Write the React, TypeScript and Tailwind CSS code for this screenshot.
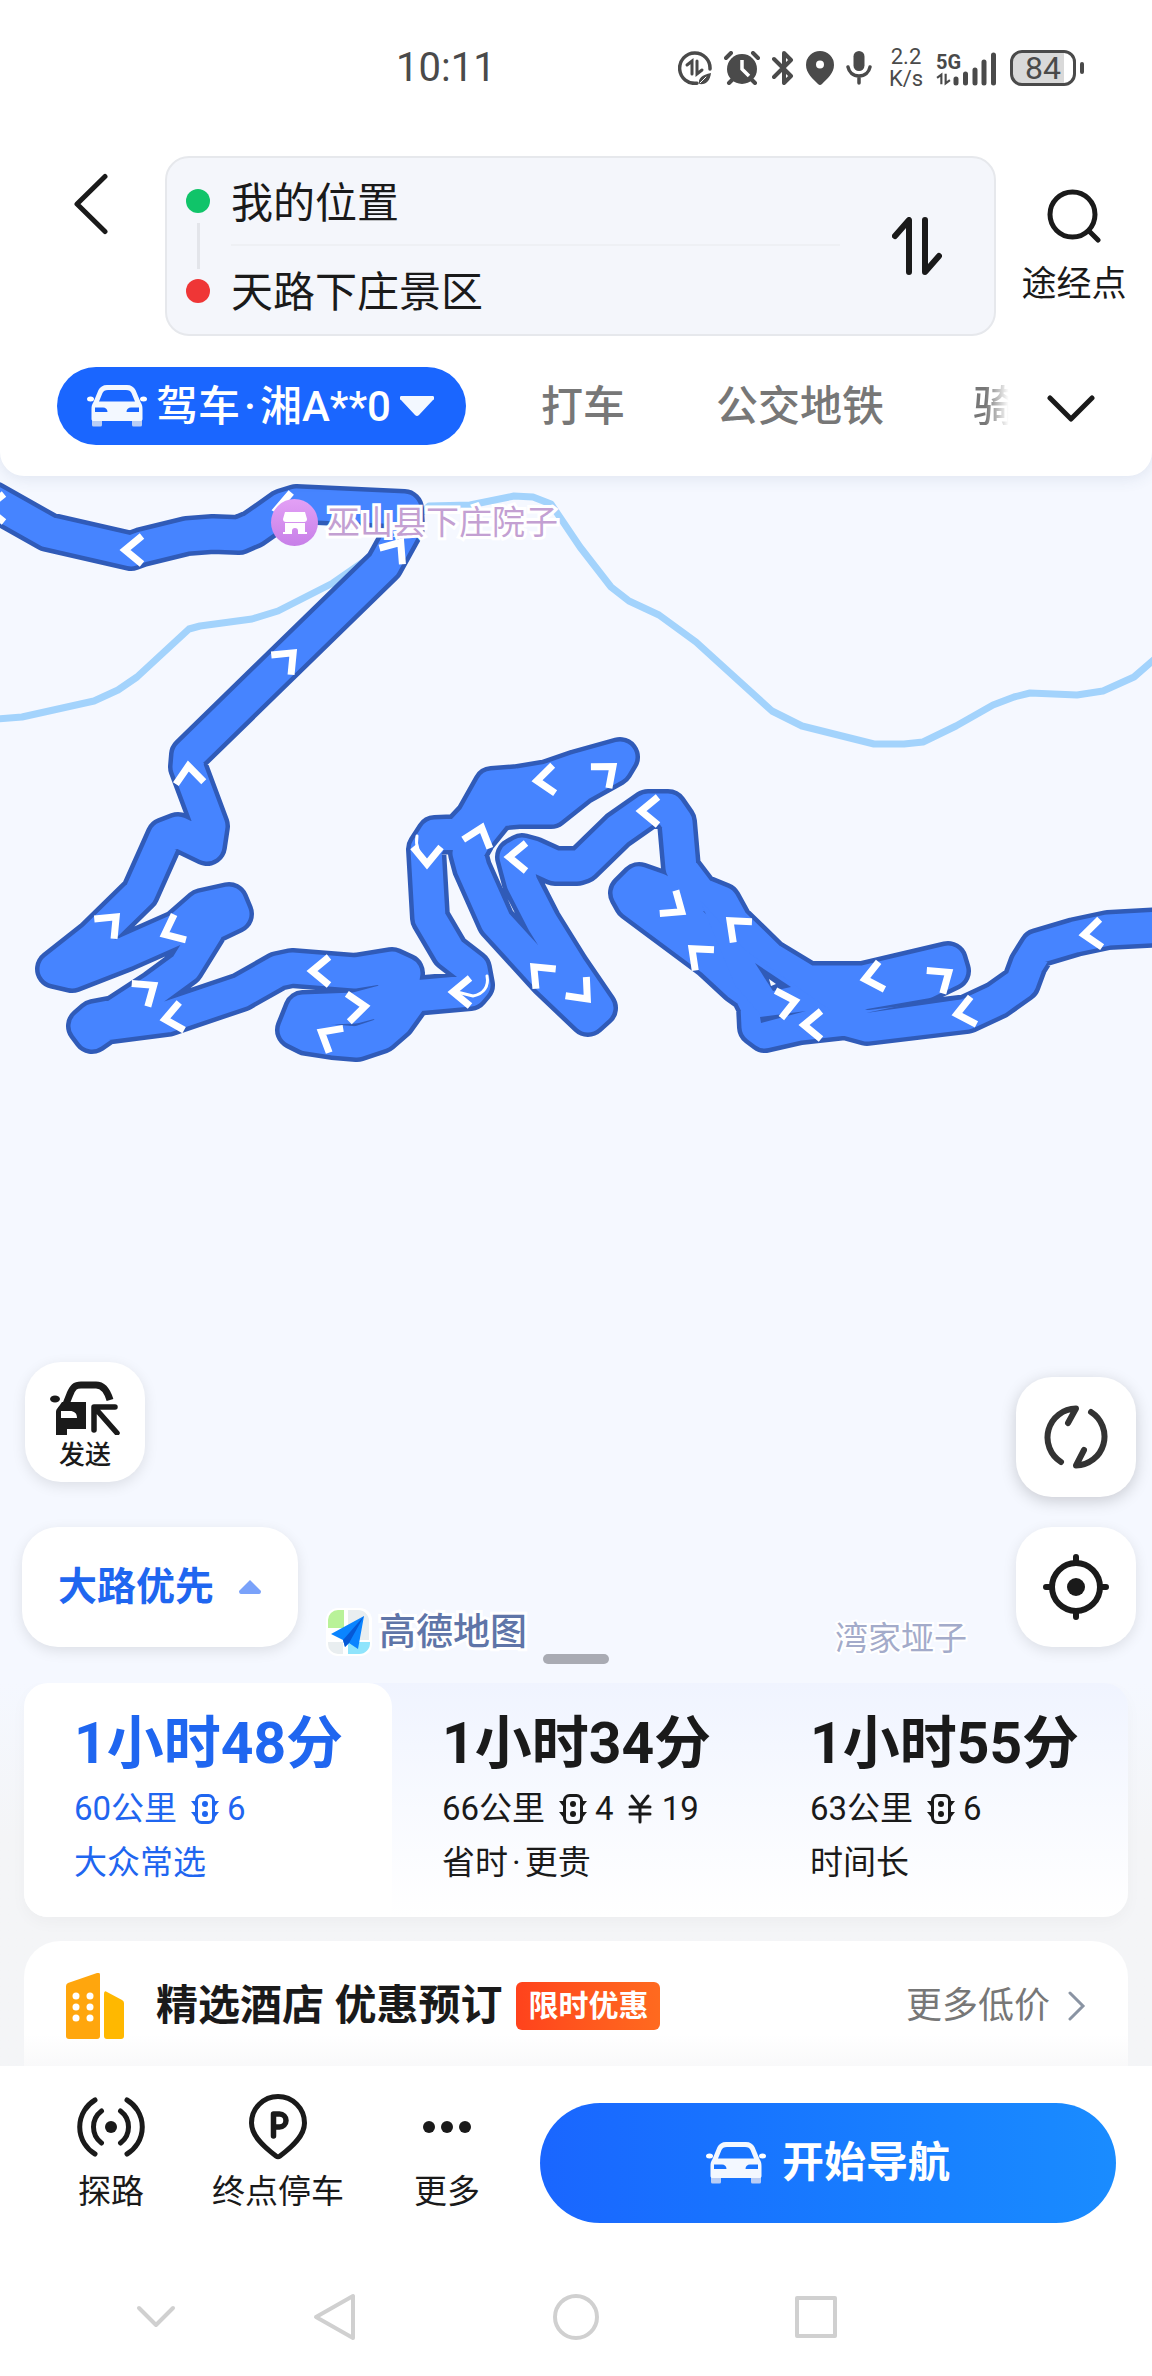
import React from "react";

const ROUTE =
  "M-7 501 L48 532 L131 551 L142 547 L187 536 L213 534 L239 535 L253 529 L283 508 L296 504 L404 509 L405 527 L384 565 L189 755 L188 767 L210 826 L207 846 L178 832 L165 837 L140 893 L93 939 L55 969 L72 973 L126 952 L178 929 L202 908 L229 902 L234 914 L211 925 L185 967 L155 989 L115 1015 L94 1019 L86 1026 L92 1034 L105 1025 L167 1017 L241 992 L278 971 L292 968 L355 973 L392 967 L405 973 L403 985 L385 1000 L355 1008 L303 1010 L295 1030 L307 1036 L333 1040 L357 1042 L381 1034 L396 1021 L414 996 L470 991 L475 985 L472 969 L450 952 L430 918 L426 849 L435 835 L459 834 L474 818 L492 786 L518 784 L548 779 L577 769 L620 757 L614 767 L580 786 L551 809 L518 809 L498 811 L477 837 L468 853 L472 868 L496 922 L548 979 L588 1017 L598 1008 L570 967 L542 922 L522 883 L515 857 L522 853 L533 856 L555 866 L577 866 L583 864 L618 830 L648 809 L668 809 L677 822 L681 868 L700 893 L722 902 L733 922 L770 958 L808 981 L863 981 L948 961 L951 971 L926 983 L863 994 L793 1002 L759 1000 L738 985 L711 960 L633 902 L628 893 L639 882 L659 889 L692 922 L737 968 L756 1006 L757 1027 L765 1033 L800 1025 L845 1020 L867 1026 L967 1014 L997 1000 L1021 983 L1028 964 L1038 948 L1075 937 L1108 930 L1164 927";

const RIVER =
  "M-4 719 L22 717 L94 701 L118 690 L137 677 L189 629 L200 626 L252 619 L278 611 L333 583 L385 547 L429 506 L470 505 L514 496 L533 497 L551 504 L580 547 L611 587 L629 601 L659 615 L696 642 L772 711 L802 726 L874 744 L904 744 L923 742 L956 726 L993 705 L1014 697 L1030 693 L1077 695 L1103 691 L1134 677 L1156 658";

// x, y of the tip and its rotation, 0 points left
const ARROWS = [
  [-17, 508, 0], [121, 550, 0], [273, 510, -10], [403, 539, 125], [296, 650, 135],
  [188, 762, 85], [119, 914, 135], [161, 936, -25], [157, 983, 145], [161, 1020, -10],
  [308, 971, 0], [369, 1006, 175], [318, 1030, 30], [449, 992, 0], [427, 868, 270],
  [483, 824, 108], [533, 781, -5], [505, 857, 0], [531, 964, 45], [616, 764, 140],
  [637, 811, 0], [685, 914, 215], [727, 918, 42], [689, 946, 42], [590, 1002, 228],
  [799, 1000, 168], [800, 1025, 0], [861, 980, -12], [952, 970, 145], [953, 1015, -12],
  [1080, 935, -5],
];

const routes = [
  { time: "1小时48分", km: "60公里", lights: "6", fee: "", notes: ["大众常选"], active: true },
  { time: "1小时34分", km: "66公里", lights: "4", fee: "19", notes: ["省时", "更贵"], active: false },
  { time: "1小时55分", km: "63公里", lights: "6", fee: "", notes: ["时间长"], active: false },
];

function CarIcon() {
  return (
    <svg viewBox="0 0 60 42" className="h-[42px] w-[60px] shrink-0">
      <path d="M5 33h10v7a1.500 1.500 0 0 1-1.500 1.500h-7A1.500 1.500 0 0 1 5 40zM45 33h10v7a1.500 1.500 0 0 1-1.500 1.500h-7A1.500 1.500 0 0 1 45 40z" fill="#b9cdf5" />
      <ellipse cx="3.500" cy="14" rx="3.500" ry="2.500" fill="#fff" />
      <ellipse cx="56.500" cy="14" rx="3.500" ry="2.500" fill="#fff" />
      <path
        fillRule="evenodd"
        fill="#f3f8ff"
        d="M20 0h20c4 0 7 2 8.500 5l5 12c1.500 2.500 2 4 2 7v10c0 1.500-1 2-2 2H6.500c-1 0-2-.5-2-2V24c0-3 .5-4.500 2-7l5-12C13 2 16 0 20 0zM21 5c-3 0-4.500 1-5.500 3L12 16.500h36L44.500 8c-1-2-2.500-3-5.500-3zM8 22.500v4.500h12.500c0-3-2-4.500-4.500-4.500zM52 22.500V27H39.500c0-3 2-4.500 4.500-4.500z"
      />
    </svg>
  );
}

function TrafficLight() {
  return (
    <svg viewBox="0 0 28 30" className="h-[30px] w-7" fill="none">
      <rect x="5.500" y="1.500" width="17" height="27" rx="5" stroke="currentColor" strokeWidth="3" />
      <path d="M4 7H0l4 5zM4 18H0l4 5zM24 7h4l-4 5zM24 18h4l-4 5z" fill="currentColor" />
      <circle cx="14" cy="10" r="3" fill="currentColor" />
      <circle cx="14" cy="20" r="3" fill="currentColor" />
    </svg>
  );
}

function StatusBar() {
  return (
    <div className="flex h-[136px] items-center justify-between pl-[396px] pr-[68px] text-[#4a4a4a]">
      <span className="text-[40px]">10:11</span>
      <div className="flex items-center gap-3">
        <svg viewBox="0 0 34 34" className="size-[34px]" fill="none" stroke="currentColor" strokeWidth="3.500" strokeLinecap="round">
          <path d="M19 32.200A15.200 15.200 0 1 1 32 18" />
          <path d="M9 14l5-4v13M19 10v13l5-4" strokeWidth="3" />
          <path d="M21 33c-1-6 3-9 12-11-1 8-5 12-12 11z" fill="currentColor" stroke="none" />
          <path d="M22 32l6-6" stroke="#fff" strokeWidth="1" />
        </svg>
        <svg viewBox="0 0 36 34" className="h-[34px] w-9">
          <circle cx="18" cy="18" r="15" fill="currentColor" />
          <path d="M2 7l5-5M34 7l-5-5M8 29l-3 3M28 29l3 3" stroke="currentColor" strokeWidth="4" strokeLinecap="round" />
          <path d="M18 9v9l7 7" fill="none" stroke="#fff" strokeWidth="3.500" />
        </svg>
        <svg viewBox="0 0 22 34" className="h-[34px] w-[22px]" fill="none" stroke="currentColor" strokeWidth="4" strokeLinecap="round" strokeLinejoin="round">
          <path d="M2 8l17 17-7 7V2l7 7L2 26" />
        </svg>
        <svg viewBox="0 0 28 34" className="h-[34px] w-7">
          <path fillRule="evenodd" fill="currentColor" d="M14 0a14 14 0 0 1 14 14c0 8-7 14-12 19a3 3 0 0 1-4 0C7 28 0 22 0 14A14 14 0 0 1 14 0zm0 9.500a4 4 0 1 0 0 8 4 4 0 0 0 0-8z" />
        </svg>
        <svg viewBox="0 0 26 34" className="h-[34px] w-[26px]" fill="none" stroke="currentColor" strokeWidth="3.500" strokeLinecap="round">
          <rect x="7.500" y="0" width="11" height="20" rx="5.500" fill="currentColor" stroke="none" />
          <path d="M2 16c1 5 5 9 11 9s10-4 11-9M13 25v7" />
        </svg>
        <div className="ml-1 w-9 text-center text-[22px] leading-[22px]">
          <div>2.2</div>
          <div>K/s</div>
        </div>
        <div className="flex h-9 w-[62px] items-end">
          <div className="-mr-1">
            <div className="text-[20px] font-bold leading-[20px]">5G</div>
            <svg viewBox="0 0 14 10" className="h-[14px] w-[15px]" fill="none" stroke="currentColor" strokeWidth="2">
              <path d="M1 4l4-3v9M9 0v9l4-3" />
            </svg>
          </div>
          <svg viewBox="0 0 44 34" className="-ml-1 h-[34px] w-11" stroke="currentColor" strokeWidth="5" strokeLinecap="round">
            <path d="M3 27v4M12.500 22v9M22 18v13M31 10v21M40.500 3v28" />
          </svg>
        </div>
        <div className="flex items-center gap-1">
          <div className="flex h-9 w-[66px] items-center justify-center rounded-xl border-3 border-[#4a4a4a] bg-linear-to-r from-[#d9d9d9] from-85% to-white to-85% text-[32px] leading-none">
            84
          </div>
          <div className="h-3 w-1 rounded-full bg-[#4a4a4a]" />
        </div>
      </div>
    </div>
  );
}

function Header() {
  return (
    <header className="relative z-10 rounded-b-3xl bg-white pb-[31px] shadow-[0_2px_16px_rgba(60,80,120,0.12)]">
      <StatusBar />
      <div className="flex pt-5">
        <button aria-label="返回" className="flex w-[165px] shrink-0 justify-center pt-[17px] pl-[17px]">
          <svg viewBox="0 0 36 62" className="h-[62px] w-9" fill="none" stroke="#1a1a1a" strokeWidth="5" strokeLinecap="round" strokeLinejoin="round">
            <path d="M32 3.500L4 31l28 27.500" />
          </svg>
        </button>
        <div className="flex min-w-0 flex-1 rounded-3xl border-2 border-[#e6e8ec] bg-[#f4f6fb] pl-[19px]">
          <div className="flex flex-col items-center py-[31px]">
            <span className="size-6 rounded-full bg-[#10c469]" />
            <span className="my-2.5 w-[3px] flex-1 bg-[#e3e5ea]" />
            <span className="size-6 rounded-full bg-[#ef3636]" />
          </div>
          <div className="ml-[21px] min-w-0 flex-1">
            <input
              aria-label="起点"
              defaultValue="我的位置"
              className="block h-[88px] w-full border-b-2 border-[#eef0f4] bg-transparent pb-1 text-[42px] text-[#1a1a1a] outline-none"
            />
            <input
              aria-label="终点"
              defaultValue="天路下庄景区"
              className="block h-[88px] w-full bg-transparent pb-1 text-[42px] text-[#1a1a1a] outline-none"
            />
          </div>
          <button aria-label="交换起终点" className="flex w-[154px] items-center justify-center">
            <svg viewBox="0 0 50 58" className="h-[58px] w-[50px]" fill="none" stroke="#1a1a1a" strokeWidth="6" strokeLinecap="round" strokeLinejoin="round">
              <path d="M3 19L17 3v52M33 3v52l14-16" />
            </svg>
          </button>
        </div>
        <button className="flex w-[156px] shrink-0 flex-col items-center pt-[33px]">
          <svg viewBox="0 0 54 54" className="size-[54px]" fill="none" stroke="#1a1a1a" strokeWidth="5" strokeLinecap="round">
            <circle cx="25.500" cy="25.500" r="22.500" />
            <path d="M42 42l9 9" />
          </svg>
          <span className="mt-[17px] text-[35px] leading-[50px]">途经点</span>
        </button>
      </div>
      <nav className="mt-[31px] flex items-center pl-[57px] text-[42px] font-medium text-[#777]">
        <button className="flex h-[78px] w-[409px] items-center rounded-full bg-[#1a66ff] pr-8 pl-[30px] text-white">
          <CarIcon />
          <span className="ml-[9px] whitespace-nowrap">
            驾车<span className="mx-1">·</span>湘A**0
          </span>
          <svg viewBox="0 0 34 20" className="ml-auto h-5 w-[34px]">
            <path d="M3 0h28a2 2 0 0 1 2 4L19 19a3 3 0 0 1-4 0L1 4a2 2 0 0 1 2-4z" fill="#f3f8ff" />
          </svg>
        </button>
        <button className="ml-[75px]">打车</button>
        <button className="ml-[91px]">公交地铁</button>
        <button className="ml-[89px] bg-linear-to-r from-[#777] from-30% to-transparent to-85% bg-clip-text whitespace-nowrap text-transparent">
          骑
        </button>
        <button aria-label="展开" className="ml-auto pt-1.5 pr-[57px]">
          <svg viewBox="0 0 48 28" className="h-7 w-12" fill="none" stroke="#1a1a1a" strokeWidth="5" strokeLinecap="round" strokeLinejoin="round">
            <path d="M3 3l21 21L45 3" />
          </svg>
        </button>
      </nav>
    </header>
  );
}

function RouteMap() {
  return (
    <section className="relative -mt-6 flex min-h-[1231px] items-end justify-between overflow-hidden bg-[#f5f8ff] pr-4 pb-9 pl-[22px]">
      <svg viewBox="0 452 1152 640" className="absolute top-0 left-0 w-full" fill="none" strokeLinejoin="round" strokeLinecap="round">
        <path d={RIVER} stroke="#a3d3fc" strokeWidth="7" />
        <path d={ROUTE} stroke="#305bb8" strokeWidth="40" />
        <path d={ROUTE} stroke="#4684ff" strokeWidth="31" />
        <path d="M700 900L745 950L830 1010L765 1020L735 985z" fill="#4684ff" />
        <path d="M755 963l36 24-18 4z" fill="#305bb8" />
        <path d="M769 979l7 5-5 2z" fill="#f5f8ff" />
        <path d="M760 1017l46-6-45 12zM866 1013l70-15 28 1z" fill="#305bb8" />
        <path d="M417 836c-2 10 2 17 8 26M487 976c2 10-3 18-14 20l-16-4" stroke="#fff" strokeWidth="3" />
        {ARROWS.map(([x, y, r]) => (
          <path
            key={`${x}-${y}`}
            d="M21 -14L4 0L21 14"
            transform={`translate(${x} ${y}) rotate(${r})`}
            stroke="#fff"
            strokeWidth="7"
            strokeLinecap="butt"
            strokeLinejoin="miter"
          />
        ))}
      </svg>

      <div className="absolute top-[47px] left-[271px] flex items-center gap-[9px]">
        <span className="flex size-[47px] items-center justify-center rounded-full bg-linear-to-b from-[#e3a0f5] to-[#c77fe8]">
          <svg viewBox="0 0 26 22" className="h-[22px] w-[26px]" fill="#fff">
            <path d="M3 0h20l2 7c0 2-1 3-3 3H4C2 10 1 9 1 7zM3 11h20v9h2v2h-9v-3a3 3 0 0 0-6 0v3H1v-2h2z" />
          </svg>
        </span>
        <span className="text-[33px] leading-[47px] text-[#c3a0d2] [-webkit-text-stroke:6px_white] [paint-order:stroke_fill]">巫山县下庄院子</span>
      </div>
      <span className="absolute bottom-[20px] left-[835px] text-[33px] leading-[48px] text-[#a3abca] [-webkit-text-stroke:4px_white] [paint-order:stroke_fill]">湾家垭子</span>

      <div className="relative flex flex-col gap-[45px]">
        <button className="ml-[3px] flex size-[120px] flex-col items-center rounded-[36px] bg-white pt-[17px] shadow-[0_4px_14px_rgba(0,0,0,0.1)]">
          <svg viewBox="0 0 70 56" className="h-14 w-[70px]" fill="#1a1a1a">
            <ellipse cx="5" cy="20" rx="5" ry="3.500" />
            <path d="M16 25l4-10c3-7 5-9 11-9h15c7 0 11 5 14 15" fill="none" stroke="#1a1a1a" strokeWidth="7" />
            <path fillRule="evenodd" d="M12 23h24v27H17v5c0 2-1 2-2 2H8c-2 0-2-1-2-2V33c0-3 2-4 6-10zM11 32v7h16c0-5-3-7-7-7z" />
            <path d="M65 28H44v23M45 29l22 25" fill="none" stroke="#1a1a1a" strokeWidth="5.500" strokeLinecap="round" strokeLinejoin="round" />
          </svg>
          <span className="mt-0.5 text-[26px] leading-9 font-medium">发送</span>
        </button>
        <button className="flex h-[120px] w-[276px] items-center rounded-[36px] bg-white pl-9 text-[39px] font-bold text-[#1f66f0] shadow-[0_4px_14px_rgba(0,0,0,0.1)]">
          大路优先
          <svg viewBox="0 0 22 14" className="ml-[25px] h-3.5 w-[22px]">
            <path d="M11 0L22 11q0 3-2 3H2q-2 0-2-3z" fill="#7aa2fa" />
          </svg>
        </button>
      </div>
      <div className="relative flex flex-col gap-[30px]">
        <button aria-label="刷新" className="flex size-[120px] items-center justify-center rounded-[36px] bg-white shadow-[0_4px_16px_rgba(0,0,0,0.18)]">
          <svg viewBox="0 0 64 64" className="size-16" fill="none" stroke="#333" strokeWidth="6" strokeLinecap="round" strokeLinejoin="round">
            <path d="M17 57A29 29 0 0 1 32 3.500L24 18M47 7A29 29 0 0 1 32 60.500L40 45" />
          </svg>
        </button>
        <button aria-label="定位" className="flex size-[120px] items-center justify-center rounded-[36px] bg-white shadow-[0_4px_14px_rgba(0,0,0,0.1)]">
          <svg viewBox="0 0 66 66" className="size-[66px]" fill="none" stroke="#1a1a1a" strokeWidth="6" strokeLinecap="round">
            <circle cx="33" cy="33" r="24" />
            <path d="M33 3v6M33 57v6M3 33h6M57 33h6" />
            <circle cx="33" cy="33" r="9" fill="#1a1a1a" stroke="none" />
          </svg>
        </button>
      </div>

      <div className="absolute bottom-[27px] left-[326px] flex items-center gap-[7px]">
        <svg viewBox="0 0 46 48" className="h-12 w-[46px]">
          <rect width="46" height="48" rx="12" fill="#fff" />
          <path d="M2 20V12A10 10 0 0 1 12 2h6v18z" fill="#b9f299" />
          <path d="M22 2h10a11 11 0 0 1 11 11v19H22zM2 34h15v12h-5A10 10 0 0 1 2 36z" fill="#e9eef0" />
          <path d="M22 34h22a11 11 0 0 1-11 12H22z" fill="#8fe4fc" />
          <path d="M38 8L5 26l12 6 2 7 4-4 9 6z" fill="#0a84ff" />
          <path d="M17 32L38 8 23 35l-4 4z" fill="#0558d6" />
        </svg>
        <span className="text-[37px] leading-[47px] font-medium text-[#5f75a8] [-webkit-text-stroke:6px_white] [paint-order:stroke_fill]">高德地图</span>
      </div>
      <div className="absolute bottom-[19px] left-1/2 h-2.5 w-[66px] -translate-x-1/2 rounded-full bg-[#a9abb3]" />
    </section>
  );
}

function RouteCards() {
  return (
    <div className="mx-6 grid grid-cols-3 rounded-3xl bg-linear-to-b from-[#f0f4ff] to-white shadow-[0_6px_16px_rgba(0,0,0,0.03)]">
      {routes.map((route) => (
        <button
          key={route.time}
          className={
            route.active
              ? "rounded-3xl rounded-br-none bg-white pt-[23px] pb-[27px] pl-[50px] text-left text-[#1f66f0]"
              : "pt-[23px] pb-[27px] pl-[50px] text-left text-[#1a1a1a]"
          }
        >
          <div className="text-[57px] leading-[76px] font-bold whitespace-nowrap">{route.time}</div>
          <div className="flex items-center text-[33px] leading-[54px]">
            {route.km}
            <span className="mr-2 ml-3.5">
              <TrafficLight />
            </span>
            {route.lights}
            {route.fee && (
              <>
                <svg viewBox="0 0 24 30" className="mr-2.5 ml-3.5 h-[30px] w-6" fill="none" stroke="currentColor" strokeWidth="3" strokeLinecap="round">
                  <path d="M4 2l8 10 8-10M12 12v16M2 13h20M2 20h20" />
                </svg>
                {route.fee}
              </>
            )}
          </div>
          <div className="text-[33px] leading-[54px]">
            {route.notes.map((note, i) => (
              <React.Fragment key={note}>
                {i > 0 && <span className="mx-1">·</span>}
                {note}
              </React.Fragment>
            ))}
          </div>
        </button>
      ))}
    </div>
  );
}

function HotelCard() {
  return (
    <a href="#hotel" className="mx-6 mt-6 flex h-[125px] items-center rounded-t-[36px] bg-linear-to-b from-white from-75% to-[#f9f9fa] px-[42px] pt-1">
      <svg viewBox="0 0 58 66" className="h-[66px] w-[58px]">
        <path d="M2 10L31 0q3-1 3 2v61q0 3-3 3H3q-3 0-3-3V13q0-2 2-3z" fill="#ffa60d" />
        <path d="M38 21q0-4 3-2l15 8q2 1 2 3v33q0 3-3 3H41q-3 0-3-3z" fill="#ffb800" />
        <g fill="#fff">
          <circle cx="10" cy="23" r="3.500" />
          <circle cx="24" cy="23" r="3.500" />
          <circle cx="10" cy="34" r="3.500" />
          <circle cx="24" cy="34" r="3.500" />
          <circle cx="10" cy="45" r="3.500" />
          <circle cx="24" cy="45" r="3.500" />
        </g>
      </svg>
      <span className="ml-8 text-[42px] font-bold text-[#1a1a1a]">精选酒店 优惠预订</span>
      <span className="ml-3.5 rounded-md bg-linear-to-r from-[#ff421c] to-[#ff6a1f] px-3 text-[30px] leading-[48px] font-bold text-white">限时优惠</span>
      <span className="ml-auto text-[36px] text-[#777]">更多低价</span>
      <svg viewBox="0 0 18 30" className="ml-[18px] h-[30px] w-[18px]" fill="none" stroke="#8a94a3" strokeWidth="3" strokeLinecap="round">
        <path d="M2 2l13 13L2 28" />
      </svg>
    </a>
  );
}

function ActionBar() {
  return (
    <div className="flex items-start bg-white pt-7 pr-9 pb-[35px] pl-[74px] text-[33px] leading-[46px] text-[#1a1a1a]">
      <button className="flex w-[74px] flex-col items-center gap-[9px]">
        <svg viewBox="0 0 68 66" className="h-[66px] w-[68px]" fill="none" stroke="#1a1a1a" strokeWidth="5" strokeLinecap="round">
          <path d="M18 6a31.500 31.500 0 0 0 0 54M50 6a31.500 31.500 0 0 1 0 54M24.500 17a20 20 0 0 0 0 32M43.500 17a20 20 0 0 1 0 32" />
          <circle cx="34" cy="33" r="6" fill="#1a1a1a" stroke="none" />
        </svg>
        探路
      </button>
      <button className="ml-[60px] flex w-[140px] flex-col items-center gap-[9px]">
        <svg viewBox="0 0 58 66" className="h-[66px] w-[58px]" fill="none" stroke="#1a1a1a" strokeWidth="5" strokeLinejoin="round" strokeLinecap="round">
          <path d="M29 2.500A26.500 26.500 0 0 1 55.500 29C55.500 42 43 53 31 62q-2 1.500-4 0C15 53 2.500 42 2.500 29A26.500 26.500 0 0 1 29 2.500z" />
          <path d="M24.500 42V20h6a6.500 6.500 0 0 1 0 13h-6" strokeWidth="5.500" />
        </svg>
        终点停车
      </button>
      <button className="ml-[62px] flex w-[74px] flex-col items-center gap-[9px]">
        <svg viewBox="0 0 48 66" className="h-[66px] w-12" fill="#1a1a1a">
          <circle cx="6" cy="33" r="6" />
          <circle cx="24" cy="33" r="6" />
          <circle cx="42" cy="33" r="6" />
        </svg>
        更多
      </button>
      <button className="mt-[9px] ml-14 flex h-[120px] flex-1 items-center justify-center gap-4 rounded-full bg-linear-to-r from-[#1a66ff] to-[#1a8cff] text-[42px] font-bold text-white">
        <CarIcon />
        开始导航
      </button>
    </div>
  );
}

function SystemNav() {
  return (
    <div className="flex h-[118px] items-center bg-white pl-[136px]">
      <svg viewBox="0 0 40 24" className="h-6 w-10" fill="none" stroke="#d0d0d0" strokeWidth="4" strokeLinecap="round" strokeLinejoin="round">
        <path d="M3 3l17 17L37 3" />
      </svg>
      <div className="ml-[137px] flex items-center gap-[196px]">
        <svg viewBox="0 0 44 48" className="h-12 w-11" fill="none" stroke="#d0d0d0" strokeWidth="4" strokeLinejoin="round">
          <path d="M40 3v42L3 24z" />
        </svg>
        <svg viewBox="0 0 46 46" className="size-[46px]" fill="none" stroke="#d0d0d0" strokeWidth="4">
          <circle cx="23" cy="23" r="21" />
        </svg>
        <svg viewBox="0 0 42 42" className="size-[42px]" fill="none" stroke="#d0d0d0" strokeWidth="4" strokeLinejoin="round">
          <rect x="2" y="2" width="38" height="38" />
        </svg>
      </div>
    </div>
  );
}

export default function App() {
  return (
    <main className="w-full bg-[#f4f5f7] font-['Roboto','Noto_Sans_CJK_SC',sans-serif] text-[#1a1a1a]">
      <Header />
      <RouteMap />
      <div className="bg-linear-to-b from-[#f5f8ff] to-[#f4f5f7] to-40%">
        <RouteCards />
        <HotelCard />
      </div>
      <ActionBar />
      <SystemNav />
    </main>
  );
}
